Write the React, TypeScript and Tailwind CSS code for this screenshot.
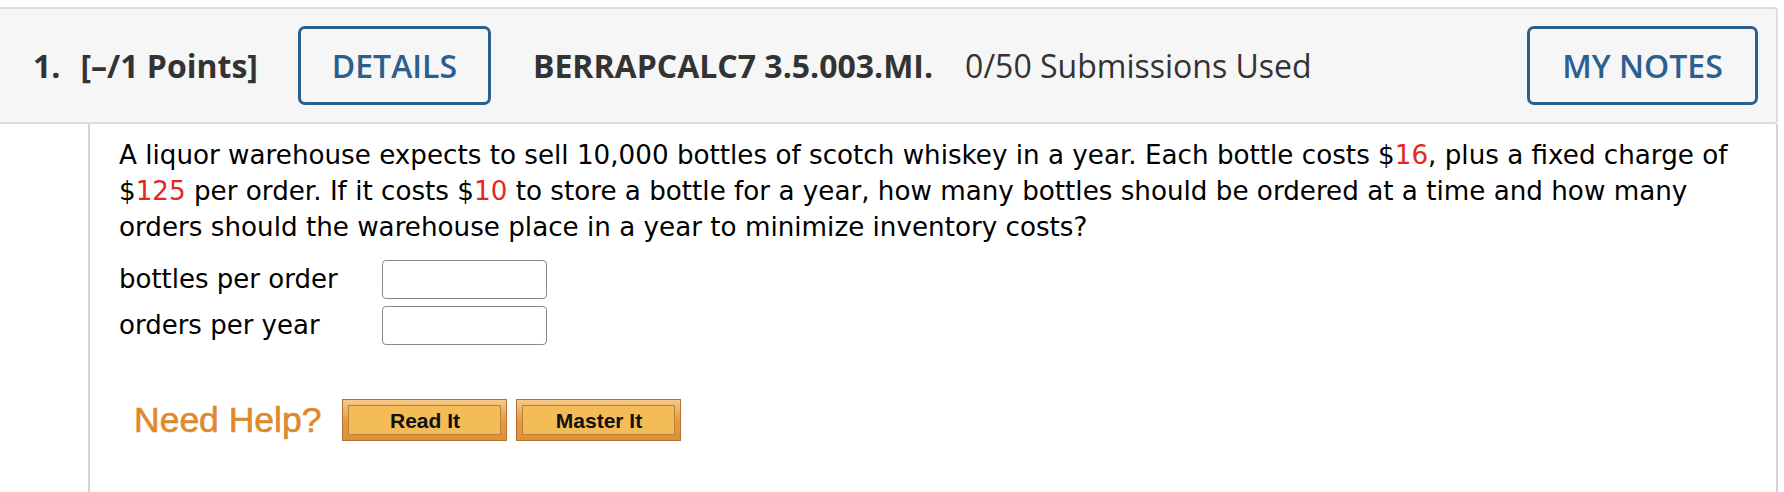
export default function App() {
  const red = 'text-[#e5281e]';
  return (
    <div className="w-[1784px] h-[492px] bg-white overflow-hidden pt-[7px]">
      <div
        className="w-[1778px] h-[117px] bg-[#f6f6f6] border-y-2 border-r-2 border-[#dddddd] rounded-tr-[4px] rounded-br-[4px] flex items-center text-[#333333]"
        style={{ fontFamily: '"Open Sans", sans-serif' }}
      >
        <span className="ml-[33px] text-[32px] font-bold">1.</span>
        <span className="ml-[20px] text-[32px] font-bold">[–/1 Points]</span>
        <button className="ml-[40px] w-[193px] h-[79px] border-[3px] border-[#2b5f8f] rounded-[7px] text-[#2b5f8f] text-[32px] font-semibold">
          DETAILS
        </button>
        <span className="ml-[42px] text-[32px] font-bold">BERRAPCALC7 3.5.003.MI.</span>
        <span className="ml-[32px] text-[32px]">0/50 Submissions Used</span>
        <button className="ml-auto mr-[18px] w-[231px] h-[79px] border-[3px] border-[#2b5f8f] rounded-[7px] text-[#2b5f8f] text-[32px] font-semibold">
          MY NOTES
        </button>
      </div>
      <div className="ml-[88px] w-[1690px] h-[370px] border-l-2 border-r-2 border-[#d4d4d4]">
        <div
          className="pl-[29px] pt-[13px] text-black"
          style={{ fontFamily: '"DejaVu Sans", Verdana, sans-serif' }}
        >
          <p className="text-[26.2px] leading-[36px] whitespace-nowrap">
            A liquor warehouse expects to sell 10,000 bottles of scotch whiskey in a year. Each bottle costs $
            <span className={red}>16</span>, plus a fixed charge of
            <br />$<span className={red}>125</span> per order. If it costs $<span className={red}>10</span> to store
            a bottle for a year, how many bottles should be ordered at a time and how many
            <br />
            orders should the warehouse place in a year to minimize inventory costs?
          </p>
          <div className="mt-[15px] flex flex-col gap-[7px] text-[26px]">
            <div className="flex items-center">
              <span className="w-[263px]">bottles per order</span>
              <input className="w-[165px] h-[39px] border border-[#8a8a8a] rounded-[4px] bg-white" />
            </div>
            <div className="flex items-center">
              <span className="w-[263px]">orders per year</span>
              <input className="w-[165px] h-[39px] border border-[#8a8a8a] rounded-[4px] bg-white" />
            </div>
          </div>
          <div className="mt-[54px] ml-[15px] flex items-center">
            <span
              className="text-[#e0882c] text-[35.5px] leading-[40px] mr-[21px]"
              style={{ fontFamily: '"Liberation Sans", Arial, sans-serif', WebkitTextStroke: '0.6px #e0882c' }}
            >
              Need Help?
            </span>
            <HelpButton label="Read It" />
            <HelpButton label="Master It" />
          </div>
        </div>
      </div>
    </div>
  );
}

function HelpButton({ label }: { label: string }) {
  return (
    <div className="mr-[9px] w-[165px] h-[42px] border border-[#a8743a] bg-gradient-to-b from-[#f7c98a] via-[#e99a3c] to-[#e48f2f] p-[5px]">
      <div className="w-full h-full border border-[#b98044] bg-[#f3bc57] flex items-center justify-center">
        <span
          className="text-[21px] font-bold text-[#111111] leading-none"
          style={{ fontFamily: '"Liberation Sans", Arial, sans-serif' }}
        >
          {label}
        </span>
      </div>
    </div>
  );
}
